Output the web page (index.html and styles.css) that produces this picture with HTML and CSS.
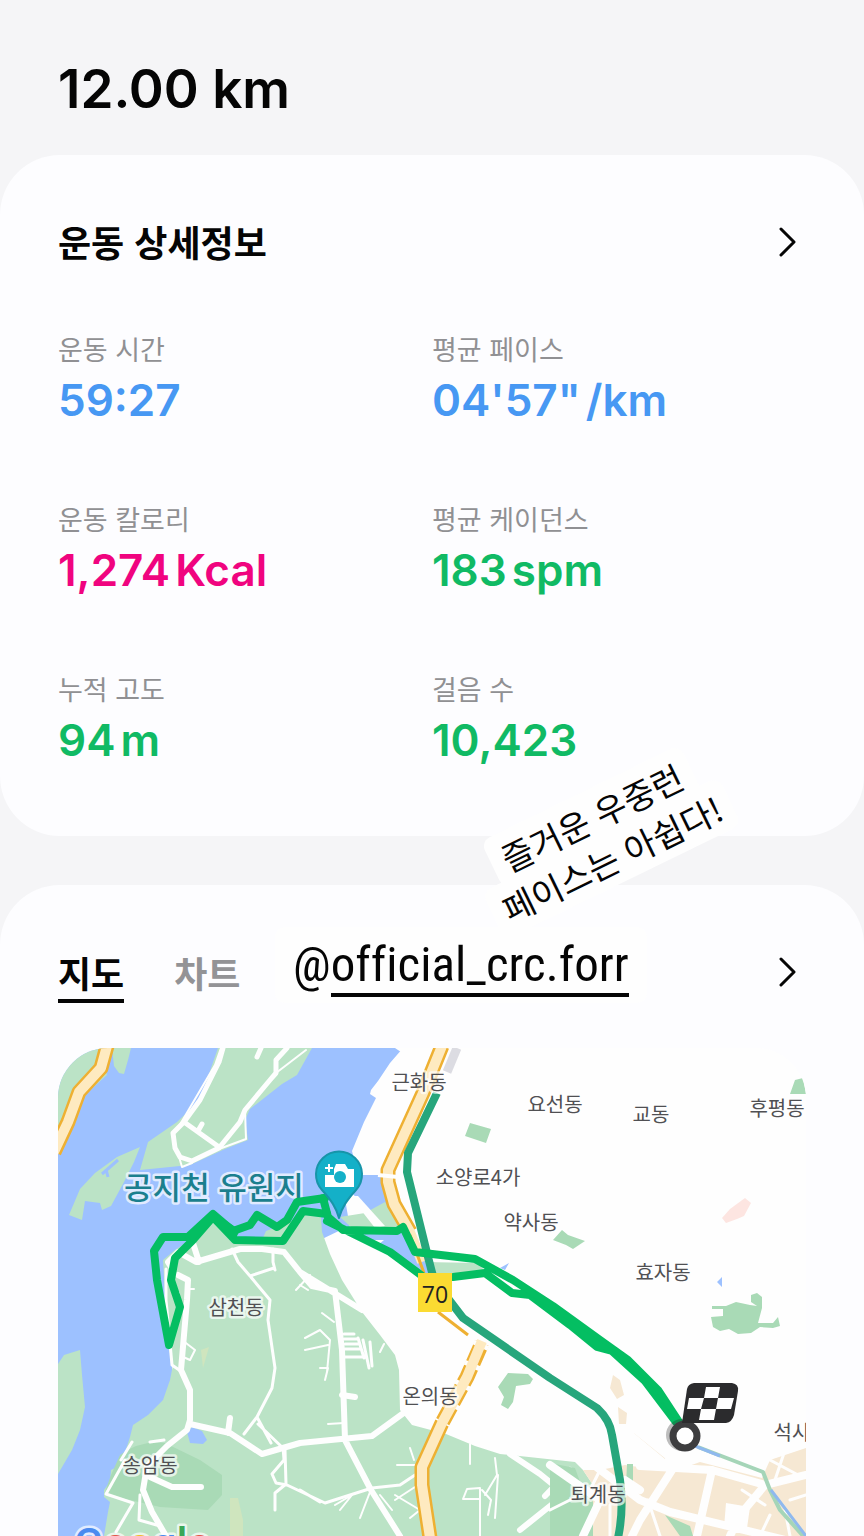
FILE: index.html
```html
<!DOCTYPE html>
<html lang="ko">
  <head>
    <meta charset="UTF-8">
    <meta name="viewport" content="width=device-width,initial-scale=1.0">
    <title>12.00 km</title>
    <link rel="stylesheet" href="styles.css">
  </head>
  <body>
    <header class="page_head">
      <h1 class="distance">12.00 km</h1>
    </header>
    <main>
      <section class="card details">
        <div class="card_head">
          <h2 class="card_title">운동 상세정보</h2>
          <button type="button" class="more_btn" aria-label="운동 상세정보">
            <svg class="chevron" viewBox="0 0 18 30"><path d="M2 2 L15 15 L2 28"/></svg>
          </button>
        </div>
        <dl class="stats">
          <div class="stat">
            <dt>운동 시간</dt>
            <dd class="blue">59:27</dd>
          </div>
          <div class="stat">
            <dt>평균 페이스</dt>
            <dd class="blue">04'57"<span class="unit">/km</span></dd>
          </div>
          <div class="stat">
            <dt>운동 칼로리</dt>
            <dd class="pink">1,274<span class="unit">Kcal</span></dd>
          </div>
          <div class="stat">
            <dt>평균 케이던스</dt>
            <dd class="green">183<span class="unit">spm</span></dd>
          </div>
          <div class="stat">
            <dt>누적 고도</dt>
            <dd class="green">94<span class="unit">m</span></dd>
          </div>
          <div class="stat">
            <dt>걸음 수</dt>
            <dd class="green">10,423</dd>
          </div>
        </dl>
        <p class="note"><span>즐거운 우중런</span><br><span>페이스는 아쉽다!</span></p>
      </section>

      <section class="card route">
        <div class="card_head">
          <div class="tabs">
            <button type="button" class="tab active">지도</button>
            <button type="button" class="tab">차트</button>
          </div>
          <button type="button" class="more_btn" aria-label="지도">
            <svg class="chevron" viewBox="0 0 18 30"><path d="M2 2 L15 15 L2 28"/></svg>
          </button>
          <a class="mention" href="#">@<span>official_crc.forr</span></a>
        </div>

        <svg class="map" viewBox="58 1048 748 488">
          <!-- water -->
          <path class="water" d="M58 1048H403L390 1063 378 1081 371 1090 370 1094 376 1098 364 1122 352 1151 358 1175H383L388 1202 403 1225 412 1240 430 1262 470 1268 490 1275 420 1278 390 1250 345 1228 320 1240 200 1300 172 1360V1536H58Z"/>
          <path class="land" d="M395 1048L410 1058 420 1048ZM344 1240L384 1240 372 1250ZM430 1282L500 1282 495 1290 430 1290Z"/>
          <path class="land" d="M344 1193L352 1193 383 1227 350 1228Z"/>

          <!-- parks and hills -->
          <path class="park" d="M58 1048H112L104 1066 107 1075 98 1083 84 1096 72 1121 58 1142ZM112 1048H131L128 1060 124 1074 119 1073 114 1066Z"/>
          <path class="park" d="M218 1048H312L297 1075 282 1084 250 1109 245 1120 248 1140 225 1149 190 1165 140 1170 148 1142 177 1122 200 1100Z"/>
          <path class="park" d="M140 1147L117 1157 95 1173 80 1189 69 1215 82 1220 85 1201 100 1203 102 1210 111 1206 124 1182 134 1162Z"/>
          <path class="park" d="M58 1364L64 1355 80 1350 82 1375 85 1407 80 1430 72 1450 58 1474Z"/>
          <path class="park" d="M163 1260L175 1250 190 1240 215 1220 236 1240 262 1240 266 1231 290 1222 305 1215 321 1217 322 1232 330 1254 342 1280 362 1312 380 1335 395 1355 399 1370 400 1410 412 1425 446 1434 475 1446 500 1454 575 1462 583 1470 593 1485V1536H104L108 1512 110 1502 104 1497 104 1490 110 1482 111 1470 121 1465 130 1437 133 1425 148 1415 163 1400 170 1380 173 1365 168 1346Z"/>
          <path class="park dark" d="M120 1455Q140 1440 165 1443L200 1460 222 1475 222 1495 208 1510 160 1507 130 1500 104 1495 111 1475Z"/>
          <path class="park" d="M365 1213L385 1202 398 1224 402 1233 352 1228 340 1217Z"/>
          <path class="park" d="M424 1262L478 1263 484 1270 440 1276Z"/>
          <path class="park dark" d="M470 1123L491 1129 486 1143 465 1136ZM562 1230L568 1235 585 1241 573 1249 566 1245 553 1240ZM790 1094L795 1080 803 1078 806 1094Z"/>
          <path class="park dark" d="M498 1387L508 1373 528 1374 533 1379 530 1384 516 1386 513 1402 508 1409 501 1405 504 1397Z"/>
          <path class="park dark" d="M712 1306L726 1306 736 1302 750 1305 757 1306 751 1302 751 1295 757 1293 762 1297 762 1308 758 1323 773 1323 778 1317 780 1326 773 1328 760 1327 751 1333 738 1334 729 1329 720 1331 713 1327 711 1317 723 1316 723 1309 712 1309Z"/>
          <path class="pink_area" d="M722 1218L730 1209 745 1198 751 1203 744 1216 737 1219 726 1223Z"/>
          <path class="water" d="M717 1282L722 1277V1287ZM187 1432L192 1427 202 1431 207 1440 203 1444 190 1443ZM500 1268L509 1263 505 1270Z"/>

          <!-- streets on the peninsula -->
          <g class="street">
            <path stroke-width="5" d="M223 1048L219 1062 200 1100 184 1122 173 1133 175 1148 180 1157 192 1161 219 1148 240 1122 245 1110 270 1080 276 1073V1060L287 1048M184 1122L219 1147M198 1131L202 1124M257 1057L261 1048"/>
            <path stroke-width="2" d="M276 1073L306 1050M245 1110L246 1139 219 1149M221 1048L215 1065 178 1128M177 1150L182 1167 192 1163"/>
          </g>
          <path class="inlet" d="M102 1174L118 1160M108 1177L106 1169"/>
          <path class="land" d="M350 1196L358 1196 385 1226 375 1228Z"/>

          <!-- streets in the hills -->
          <g class="street">
            <path stroke-width="6" d="M172 1268L168 1262 178 1252 196 1262 240 1249 262 1249 284 1252 300 1272 312 1286 335 1291 342 1350 345 1440 371 1490 400 1536M192 1240L199 1262M178 1275L188 1280 187 1300 181 1370 190 1390 190 1420 187 1430 167 1446 147 1466 143 1490 152 1512 166 1536M190 1424L230 1433 262 1454 300 1443 372 1436 405 1412M228 1433L230 1418M150 1477L172 1487H201M300 1272L362 1310"/>
            <path stroke-width="3" d="M166 1269L166 1300 172 1365 182 1372M232 1249L238 1262 250 1276 270 1300 268 1320 275 1368 272 1388 257 1417 271 1443M275 1270L273 1262V1249M250 1276L274 1268M257 1417L244 1434M258 1424L285 1450 286 1484M286 1484L275 1493 275 1510M300 1490L320 1502M283 1447L284 1460 272 1474 276 1483 287 1485 325 1503 372 1488 400 1485 415 1475M125 1460L106 1494 133 1503 116 1532M150 1442L164 1440M121 1460L132 1442M140 1495L139 1520 160 1526"/>
            <path stroke-width="2" d="M187 1289H194M179 1293L173 1292M182 1340L195 1350 190 1360 181 1356M305 1338L320 1330 330 1340 327 1372M322 1313L334 1322M305 1350L328 1345M320 1368L328 1368 325 1380M384 1344L380 1352M344 1395L356 1397M328 1424L344 1423M410 1448L414 1460M397 1465L415 1465M335 1505L352 1495 340 1510M360 1518L370 1492M380 1495L392 1510M395 1495L420 1510 410 1518M395 1500L418 1485M470 1444L470 1464M495 1458L497 1475 485 1495M463 1499L467 1489 480 1488V1536M463 1499H480M498 1475L495 1518M482 1490L491 1500 488 1515M296 1290L310 1275M300 1285L308 1290"/>
            <path stroke-width="3" d="M344 1334H354M344 1339H356M345 1344H358M345 1349H360M345 1357H362M358 1338L364 1358M363 1340L369 1368M370 1342L372 1366"/>
            <path stroke-width="6" d="M510 1454L540 1474 572 1500M520 1530L560 1498M342 1395L355 1397M570 1470L545 1496"/>
          </g>
          <path class="strip" d="M201 1350L209 1347 203 1368ZM230 1498L238 1498 243 1520V1536H230Z"/>

          <!-- town blocks -->
          <path class="block" d="M613 1375L620 1380 624 1395 617 1399 610 1388ZM618 1407L627 1413 626 1424 619 1424ZM583 1470L600 1470 625 1465 672 1472 700 1462 762 1478 770 1460 806 1448V1536H593V1485Z"/>
          <path class="path_line" d="M633 1435L664 1460"/>
          <path class="park dark" d="M550 1463L575 1468 583 1490 593 1500V1536H550ZM627 1464H633V1485L626 1486ZM665 1515L690 1526 693 1536H680Z"/>
          <g class="street">
            <path stroke-width="8" d="M624 1430L672 1470 640 1520 632 1536M590 1462L640 1500 670 1512 806 1545M640 1466L712 1470 765 1485 806 1475M712 1470L697 1536M765 1485L740 1515 730 1536M640 1490L625 1480M550 1465L600 1500 583 1536"/>
            <path stroke-width="3" d="M770 1460L800 1476M785 1450L775 1480M740 1462L762 1475M600 1470L590 1490 550 1510M648 1500L660 1536M742 1490L765 1505M790 1500L806 1495M770 1515L760 1536M785 1510L790 1536M610 1505V1536"/>
          </g>
          <path class="land" d="M726 1503L750 1507 747 1528 724 1528Z"/>
          <path class="creek_bank" d="M698 1447L763 1472 770 1490 780 1510 805 1538"/>
          <path class="creek" d="M695 1446L720 1456M771 1490L806 1536"/>

          <!-- main roads -->
          <path class="rail" d="M457 1048L447 1072"/>
          <path class="road_edge" d="M107 1046L101 1068 79 1092 68 1122 54 1152"/>
          <path class="road" d="M107 1046L101 1068 79 1092 68 1122 54 1152"/>
          <path class="road_edge" d="M442 1046L423 1093 388 1170 388 1182 394 1204 410 1232"/>
          <path class="road" d="M442 1046L423 1093 388 1170 388 1182 394 1204 410 1232 422 1262"/>
          <path class="road_thin" d="M410 1235L424 1273M438 1312L468 1335"/>
          <path class="gap" d="M378 1175L398 1177"/>
          <path class="road_edge" d="M482 1343L467 1377 442 1423 422 1467 422 1485 430 1538"/>
          <path class="road_dash" d="M482 1343L467 1377 442 1423"/>
          <path class="road" d="M482 1341L467 1377 442 1423 422 1467 422 1485 430 1538"/>
          <path class="express" d="M437 1093L408 1153 407 1172 428 1257 434 1280 453 1305 463 1318 550 1378 597 1408Q610 1420 612 1435L620 1480Q624 1510 618 1538"/>

          <!-- place names -->
          <g class="place">
            <text x="419" y="1090">근화동</text>
            <text x="555" y="1112">요선동</text>
            <text x="651" y="1122">교동</text>
            <text x="777" y="1116">후평동</text>
            <text x="478" y="1185">소양로4가</text>
            <text x="531" y="1230">약사동</text>
            <text x="663" y="1280">효자동</text>
            <text x="236" y="1315">삼천동</text>
            <text x="430" y="1404">온의동</text>
            <text x="150" y="1473">송암동</text>
            <text x="598" y="1502">퇴계동</text>
            <text x="792" y="1440">석사</text>
          </g>
          <text class="landmark" x="214" y="1199">공지천 유원지</text>

          <!-- run -->
          <path class="run" d="M325 1198L297 1202 287 1220 277 1227 257 1215 250 1225 233 1231 213 1214 188 1237 163 1237 154 1251 157 1280 169 1345 180 1307 171 1280 175 1258 193 1240 213 1217 235 1240 283 1241 303 1211 327 1214"/>
          <path class="run" d="M323 1198L328 1217 343 1230 397 1231 403 1227 415 1252 475 1259 513 1280 553 1306 600 1340 628 1360 658 1390 679 1422M327 1221L390 1252 425 1278 453 1277 485 1273 512 1293 530 1295 570 1325 597 1347 612 1351 645 1381 676 1422"/>
          <path class="run_fill" d="M213 1212L188 1237 192 1242 213 1222 235 1240 240 1230ZM520 1288L628 1360 655 1390 676 1422 645 1381 612 1351 597 1349 550 1311Z"/>

          <!-- route number -->
          <path class="shield" d="M418 1273H452V1312H418Z"/>
          <text class="shield_no" x="435" y="1303">70</text>

          <!-- photo spot -->
          <path class="pin" d="M339 1218C336 1207 331 1200 322 1190A23 23 0 1 1 356 1190C347 1200 342 1207 339 1218Z"/>
          <path class="camera" d="M334 1169L336 1164H345L348 1169H354V1187H325V1175H334Z"/>
          <circle class="lens" cx="340" cy="1177" r="6"/>
          <path class="plus" d="M329 1164V1172M325 1168H333"/>

          <!-- finish -->
          <circle class="halo" cx="682" cy="1435" r="16"/>
          <circle class="finish" cx="685" cy="1436" r="12"/>
          <path class="flag" d="M694 1383H732Q739 1384 738 1391L734 1415Q732 1422 726 1423H682L687 1389Q688 1384 694 1383Z"/>
          <path class="checks" d="M706 1387H720L718 1398H704ZM701 1409H716L714 1420H699ZM689 1398H704L701 1409H687ZM718 1398H734L731 1409H716Z"/>

          <text class="google" x="74" y="1558"><tspan class="g_blue">G</tspan><tspan class="g_red">o</tspan><tspan class="g_yellow">o</tspan><tspan class="g_blue">g</tspan><tspan class="g_green">l</tspan><tspan class="g_red">e</tspan></text>
        </svg>
      </section>
    </main>
  </body>
</html>
```
FILE: styles.css
```css
*{
  box-sizing:border-box;
  margin:0;
  padding:0;
}
body{
  background-color:#f5f5f7;
  color:#050505;
  font-family:Inter,"Noto Sans CJK KR",sans-serif;
  overflow-x:hidden;
}
button{
  background:none;
  border:0;
  color:inherit;
  font-family:inherit;
  cursor:pointer;
}
.page_head{
  padding:55px 58px 32px;
}
.distance{
  font-size:53px;
  font-weight:600;
  line-height:68px;
}

/* cards */
.card{
  position:relative;
  padding:60px 58px 0;
  background-color:#fdfdff;
  border-radius:60px;
}
.details{
  padding-bottom:67px;
}
.route{
  margin-top:49px;
  border-radius:60px 60px 0 0;
}
.card_head{
  display:flex;
  justify-content:space-between;
  align-items:flex-start;
}
.card_title{
  font-family:"Noto Sans CJK KR",sans-serif;
  font-size:36px;
  font-weight:700;
  line-height:52px;
}
.more_btn{
  display:flex;
  align-items:center;
  justify-content:center;
  width:36px;
  height:54px;
}
.chevron{
  width:18px;
  height:30px;
  fill:none;
  stroke:#050505;
  stroke-width:3;
  stroke-linecap:round;
  stroke-linejoin:round;
}

/* numbers */
.stats{
  display:grid;
  grid-template-columns:1fr 1fr;
  row-gap:68px;
  margin-top:58px;
}
.stat dt{
  color:#909093;
  font-family:"Noto Sans CJK KR",sans-serif;
  font-size:27px;
  line-height:44px;
}
.stat dd{
  font-size:44px;
  font-weight:600;
  line-height:58px;
  padding-top:0;
}
.unit{
  margin-left:5px;
}
.blue{
  color:#4798f3;
}
.pink{
  color:#f0047f;
}
.green{
  color:#10ba64;
}

/* stickers */
.note{
  position:absolute;
  left:602px;
  bottom:-48px;
  z-index:2;
  transform:translateX(-50%) rotate(-26deg);
  font-family:"Noto Sans CJK KR",sans-serif;
  font-size:34px;
  font-weight:400;
  line-height:46px;
  text-align:center;
  white-space:nowrap;
}
.note span{
  padding:2px 12px;
  background-color:#fefefe;
  border-radius:10px;
}
.mention{
  position:absolute;
  top:42px;
  left:275px;
  padding:0 18px;
  background-color:#fefefe;
  border-radius:10px;
  color:#050505;
  font-family:"Roboto Condensed",Roboto,sans-serif;
  font-size:49px;
  font-variant-ligatures:none;
  line-height:76px;
  text-decoration:none;
}
.mention span{
  border-bottom:4px solid #050505;
}

/* tabs */
.tabs{
  display:flex;
  gap:50px;
  margin-bottom:45px;
}
.tab{
  border-bottom:4px solid transparent;
  color:#939396;
  font-family:"Noto Sans CJK KR",sans-serif;
  font-size:36px;
  font-weight:700;
  line-height:54px;
}
.tab.active{
  border-color:#050505;
  color:#050505;
}

/* map */
.map{
  display:block;
  width:100%;
  background-color:#fefefe;
  border-radius:50px 50px 0 0;
  overflow:hidden;
}
.map path{
  stroke-linejoin:round;
}
.water{
  fill:#9dc1ff;
}
.land{
  fill:#fefefe;
}
.park{
  fill:#bbe3c6;
}
.park.dark{
  fill:#a9dab6;
}
.pink_area{
  fill:#fde5e1;
}
.block{
  fill:#f6e8d3;
}
.strip{
  fill:#cfe5be;
}
.street{
  fill:none;
  stroke:#fefefe;
  stroke-linecap:round;
}
.road_edge,.road,.road_dash,.road_thin,.gap,.express,.run,.rail,.creek,.creek_bank,.path_line,.inlet{
  fill:none;
}
.inlet{
  stroke:#9dc1ff;
  stroke-width:3;
}
.road_edge{
  stroke:#eeb032;
  stroke-width:15;
}
.road_dash{
  stroke:#fefefe;
  stroke-width:16;
  stroke-dasharray:5 17;
}
.road{
  stroke:#feeac0;
  stroke-width:10;
}
.road_thin{
  stroke:#eeb032;
  stroke-width:3;
}
.gap{
  stroke:#fefefe;
  stroke-width:4;
}
.rail{
  stroke:#dcdce2;
  stroke-width:9;
}
.express{
  stroke:#27a67c;
  stroke-width:8;
}
.creek_bank{
  stroke:#a5d5b8;
  stroke-width:4;
}
.creek{
  stroke:#8fb9ee;
  stroke-width:3;
}
.path_line{
  stroke:#f6e8d3;
  stroke-width:4;
}
.run{
  stroke:#04be62;
  stroke-width:8;
  stroke-linecap:round;
}
.run_fill{
  fill:#04be62;
}
.map text{
  font-family:"Noto Sans CJK KR",sans-serif;
  text-anchor:middle;
  paint-order:stroke;
  stroke:rgba(255,255,255,.7);
  stroke-width:5px;
  stroke-linejoin:round;
}
.place text{
  fill:#505053;
  font-size:20px;
}
.map .landmark{
  fill:#1b7f8e;
  font-size:31px;
  font-weight:500;
}
.shield{
  fill:#fbdb32;
}
.map .shield_no{
  fill:#222;
  stroke:none;
  font-family:"Open Sans",sans-serif;
  font-size:23px;
}
.pin{
  fill:#14b0c8;
  stroke:#1795a9;
  stroke-width:2;
}
.camera{
  fill:#fff;
}
.lens{
  fill:#14b0c8;
}
.plus{
  stroke:#fff;
  stroke-width:2;
}
.halo{
  fill:rgba(40,40,40,.3);
}
.finish{
  fill:#fff;
  stroke:#3d3d3f;
  stroke-width:7;
}
.flag{
  fill:#2b2b2d;
}
.checks{
  fill:#fff;
}
.map .google{
  font-family:Roboto,sans-serif;
  font-size:43px;
  font-weight:500;
  text-anchor:start;
}
.g_blue{
  fill:#4a8bef;
}
.g_red{
  fill:#e4574b;
}
.g_yellow{
  fill:#f2bd2c;
}
.g_green{
  fill:#3aa757;
}
```
